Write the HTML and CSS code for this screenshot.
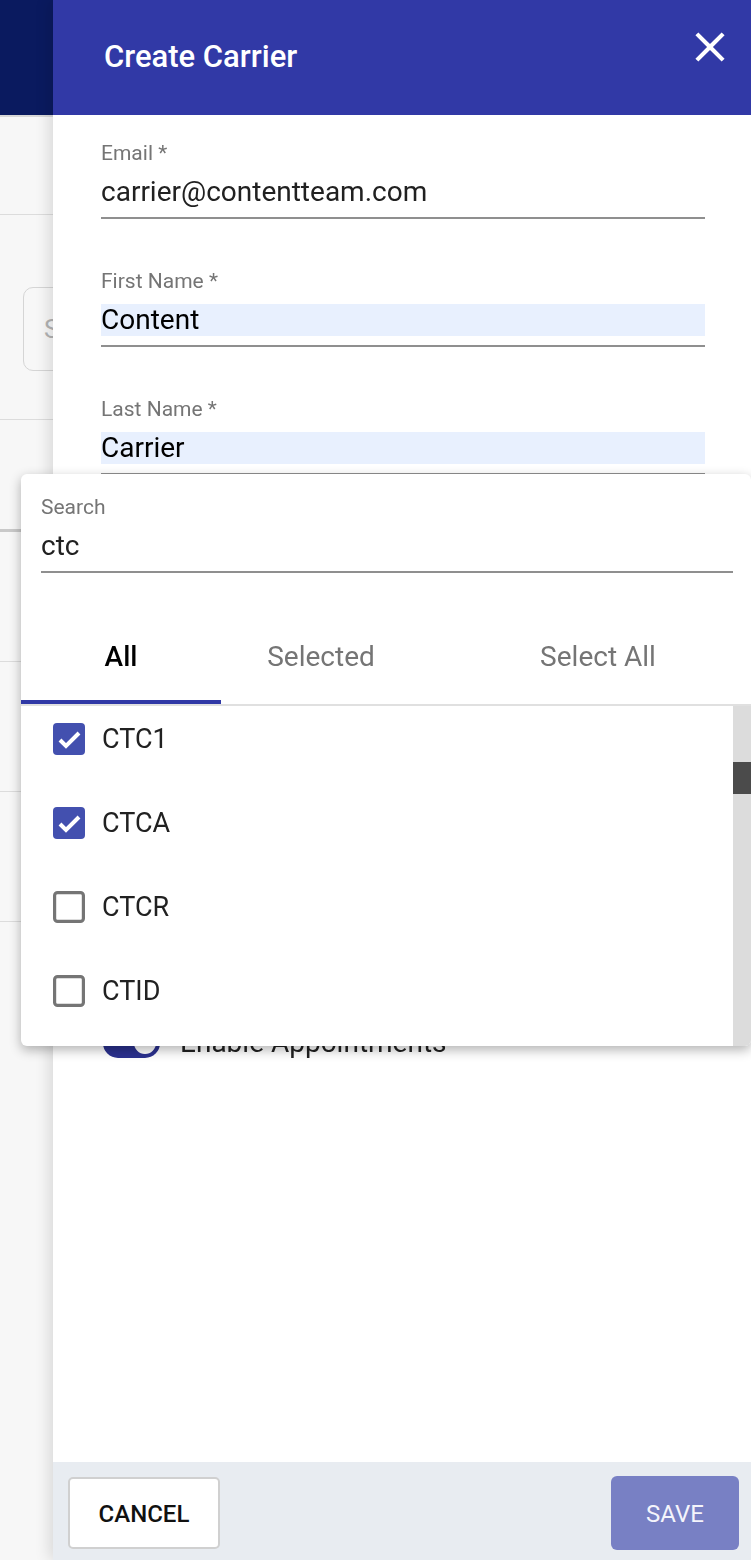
FILE: index.html
```html
<!DOCTYPE html>
<html lang="en">
<head>
  <meta charset="UTF-8" />
  <meta name="viewport" content="width=device-width, initial-scale=1.0"/>
  <title>Create Carrier</title>
  <link rel="stylesheet" href="styles.css">
</head>
<body>

<!-- page behind the drawer -->
<div class="app">
  <header class="app-bar"></header>
  <div class="app-row row-a"></div>
  <div class="app-row row-b">
    <div class="app-search">Search carriers</div>
  </div>
  <div class="app-row row-c"></div>
  <div class="app-row row-d"></div>
  <div class="app-row row-d"></div>
  <div class="app-row row-d"></div>
</div>

<!-- drawer -->
<aside class="drawer">
  <div class="drawer-head">
    <h1>Create Carrier</h1>
    <button class="close-btn" aria-label="Close">
      <svg width="50" height="50" viewBox="0 0 24 24"><path fill="#fff" d="M19 6.41L17.59 5 12 10.59 6.41 5 5 6.41 10.59 12 5 17.59 6.41 19 12 13.41 17.59 19 19 17.59 13.41 12z"/></svg>
    </button>
  </div>

  <div class="drawer-body">
    <div class="field">
      <div class="field-label">Email *</div>
      <div class="field-value">carrier@contentteam.com</div>
    </div>
    <div class="field">
      <div class="field-label">First Name *</div>
      <div class="field-value autofill">Content</div>
    </div>
    <div class="field">
      <div class="field-label">Last Name *</div>
      <div class="field-value autofill">Carrier</div>
    </div>
    <div class="field">
      <div class="field-label">Phone</div>
      <div class="field-value">&nbsp;</div>
    </div>
    <div class="field">
      <div class="field-label">Agency</div>
      <div class="field-value">&nbsp;</div>
    </div>
    <div class="field">
      <div class="field-label">Carrier Codes</div>
      <div class="field-value">CTC1, CTCA</div>
    </div>
    <div class="toggle-row">
      <span class="switch"><span class="switch-thumb"></span></span>
      <span class="toggle-label">Enable Appointments</span>
    </div>
  </div>

  <div class="drawer-foot">
    <button class="cancel-btn">CANCEL</button>
    <button class="save-btn">SAVE</button>
  </div>
</aside>

<!-- carrier code picker -->
<div class="picker">
  <div class="picker-search">
    <div class="field-label">Search</div>
    <div class="field-value">ctc</div>
  </div>

  <div class="tabs">
    <div class="tab active">All</div>
    <div class="tab">Selected</div>
    <div class="tab select-all">Select All</div>
  </div>

  <div class="picker-list">
    <div class="options">
      <div class="option">
        <svg class="box" width="32" height="32" viewBox="0 0 32 32"><rect width="32" height="32" rx="4" fill="#4350af"/><polyline points="7,17 13,23 26,10" fill="none" stroke="#fff" stroke-width="4"/></svg>
        <span>CTC1</span>
      </div>
      <div class="option">
        <svg class="box" width="32" height="32" viewBox="0 0 32 32"><rect width="32" height="32" rx="4" fill="#4350af"/><polyline points="7,17 13,23 26,10" fill="none" stroke="#fff" stroke-width="4"/></svg>
        <span>CTCA</span>
      </div>
      <div class="option">
        <svg class="box" width="32" height="32" viewBox="0 0 32 32"><rect x="1.6" y="1.6" width="28.8" height="28.8" rx="3" fill="none" stroke="#757575" stroke-width="3.2"/></svg>
        <span>CTCR</span>
      </div>
      <div class="option">
        <svg class="box" width="32" height="32" viewBox="0 0 32 32"><rect x="1.6" y="1.6" width="28.8" height="28.8" rx="3" fill="none" stroke="#757575" stroke-width="3.2"/></svg>
        <span>CTID</span>
      </div>
    </div>
    <div class="scrollbar"><div class="scroll-thumb"></div></div>
  </div>
</div>

</body>
</html>
```

FILE: styles.css
```css
* {
  box-sizing: border-box;
}
body {
  margin: 0;
  font-family: Roboto, "Liberation Sans", Arial, sans-serif;
  background: #f7f7f7;
  overflow: hidden;
  height: 1560px;
}
button {
  font-family: inherit;
  cursor: pointer;
}

/* page behind */
.app-bar {
  height: 117px;
  background: #0a1a5f;
  border-bottom: 2px solid #d8d8d8;
}
.app-row {
  border-bottom: 1px solid #dcdcdc;
}
.row-a {
  height: 98px;
}
.row-b {
  height: 205px;
  padding: 72px 0 0 23px;
}
.row-c {
  height: 112px;
  border-bottom: 3px solid #c9c9c9;
}
.row-d {
  height: 130px;
}
.app-search {
  height: 84px;
  width: 300px;
  border: 1.5px solid #d5d5d5;
  border-radius: 10px;
  padding-left: 20px;
  line-height: 82px;
  font-size: 26px;
  color: #b3b3b3;
}

/* drawer */
.drawer {
  position: fixed;
  top: 0;
  bottom: 0;
  left: 53px;
  right: 0;
  background: #fff;
  display: flex;
  flex-direction: column;
  box-shadow: -4px 0 14px rgba(0,0,0,0.12);
}
.drawer-head {
  height: 115px;
  flex-shrink: 0;
  background: #3139a6;
  display: flex;
  justify-content: space-between;
  align-items: flex-start;
  padding: 0 16px 0 51px;
}
.drawer-head h1 {
  margin: 40px 0 0;
  font-size: 31px;
  line-height: 34px;
  font-weight: 500;
  color: #fff;
}
.close-btn {
  margin-top: 22px;
  width: 50px;
  height: 50px;
  padding: 0;
  border: none;
  background: none;
}
.close-btn svg {
  display: block;
}
.drawer-body {
  flex: 1;
  overflow: hidden;
  padding: 27px 46px 0 48px;
}
.field {
  margin-bottom: 51px;
  padding-bottom: 9px;
  border-bottom: 2px solid #8f8f8f;
}
.field-label {
  font-size: 21px;
  line-height: 22px;
  color: #757575;
}
.field-value {
  margin-top: 12px;
  font-size: 28px;
  line-height: 32px;
  color: #212121;
}
.autofill {
  background: #e8f0fe;
  color: #000;
}
.toggle-row {
  margin-top: 167px;
  margin-left: 2px;
  display: flex;
  align-items: center;
}
.switch {
  width: 57px;
  height: 30px;
  border-radius: 15px;
  background: #2b318f;
  display: flex;
  justify-content: flex-end;
  align-items: center;
  padding-right: 4px;
}
.switch-thumb {
  width: 22px;
  height: 22px;
  border-radius: 50%;
  background: #fff;
}
.toggle-label {
  margin-left: 20px;
  font-size: 28px;
  color: #212121;
}
.drawer-foot {
  height: 98px;
  flex-shrink: 0;
  background: #e8ecf1;
  display: flex;
  justify-content: space-between;
  align-items: center;
  padding: 3px 12px 0 15px;
}
.cancel-btn {
  width: 152px;
  height: 72px;
  background: #fff;
  border: 2px solid #d0d0d0;
  border-radius: 5px;
  padding-top: 4px;
  font-size: 24px;
  font-weight: 500;
  color: #111;
}
.save-btn {
  width: 128px;
  height: 74px;
  background: #7880c4;
  border: none;
  border-radius: 6px;
  padding-top: 4px;
  font-size: 24px;
  color: #f4f4fb;
}

/* picker */
.picker {
  position: fixed;
  top: 474px;
  left: 21px;
  width: 730px;
  height: 572px;
  background: #fff;
  border-radius: 6px;
  box-shadow: 0 4px 12px rgba(0,0,0,0.3);
  display: flex;
  flex-direction: column;
  overflow: hidden;
}
.picker-search {
  padding: 22px 18px 0 20px;
}
.picker-search .field-value {
  padding-bottom: 9px;
  border-bottom: 2px solid #8f8f8f;
}
.tabs {
  margin-top: 37px;
  display: flex;
  border-bottom: 2px solid #e0e0e0;
}
.tab {
  width: 200px;
  height: 94px;
  line-height: 94px;
  text-align: center;
  font-size: 28px;
  color: #757575;
  border-bottom: 4px solid transparent;
}
.tab.active {
  color: #000;
  font-weight: 500;
  border-bottom-color: #3039a6;
}
.select-all {
  flex: 1;
  padding-left: 24px;
}
.picker-list {
  flex: 1;
  display: flex;
  overflow: hidden;
}
.options {
  flex: 1;
  margin-top: -9px;
}
.option {
  height: 84px;
  display: flex;
  align-items: center;
  padding-left: 32px;
  font-size: 27px;
  color: #212121;
}
.option .box {
  margin-right: 17px;
  flex-shrink: 0;
}
.scrollbar {
  width: 18px;
  background: #dcdcdc;
  padding-top: 56px;
}
.scroll-thumb {
  height: 32px;
  background: #4b4b4b;
}
```
